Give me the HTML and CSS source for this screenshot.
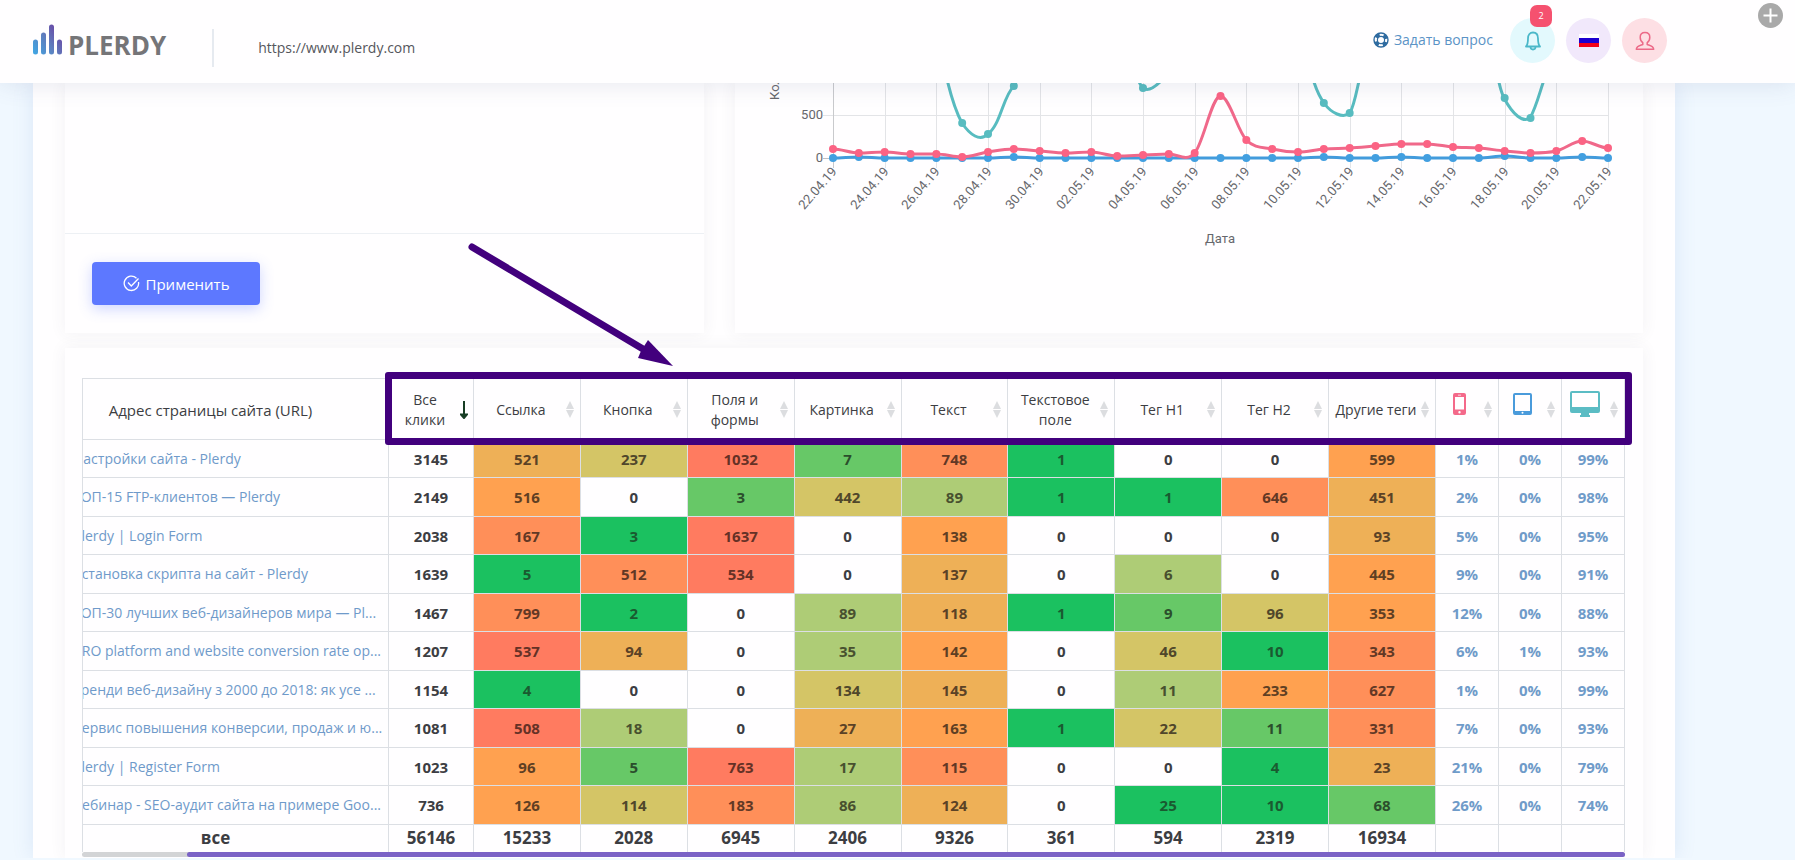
FILE: index.html
```html
<!DOCTYPE html>
<html lang="ru">
<head>
<meta charset="utf-8">
<title>Plerdy</title>
<link rel="stylesheet" href="styles.css">
</head>
<body>
<header class="topbar">
  <a class="logo" href="#">
    <svg class="logo-mark" viewBox="0 0 30 31" aria-hidden="true">
      <defs>
        <linearGradient id="bars" x1="0" y1="1" x2="1" y2="0.3">
          <stop offset="0" stop-color="#3fa9e6"/><stop offset="0.55" stop-color="#5f7dbd"/><stop offset="1" stop-color="#6a45a4"/>
        </linearGradient>
      </defs>
      <path fill="url(#bars)" d="M0 18a2.500 2.500 0 0 1 5 0v10a2.500 2.500 0 0 1-5 0zM8 11a2.500 2.500 0 0 1 5 0v17a2.500 2.500 0 0 1-5 0zM16 3a2.500 2.500 0 0 1 5 0v25a2.500 2.500 0 0 1-5 0zM24 18a2.500 2.500 0 0 1 5 0v10a2.500 2.500 0 0 1-5 0z"/>
    </svg>
    <span class="logo-name">PLERDY</span>
  </a>
  <span class="divider"></span>
  <span class="site">https://www.plerdy.com</span>
  <nav class="tools">
    <a class="ask" href="#">
      <svg viewBox="0 0 16 16" aria-hidden="true">
        <circle cx="8" cy="8" r="7" fill="none" stroke="#2f6ba0" stroke-width="1.4"/>
        <circle cx="8" cy="8" r="3.600" fill="none" stroke="#2f6ba0" stroke-width="1.2"/>
        <circle cx="8" cy="8" r="5.300" fill="none" stroke="#2f6ba0" stroke-width="3.600" stroke-dasharray="4.200 4.120" stroke-dashoffset="-2.100"/>
      </svg>
      Задать вопрос
    </a>
    <button class="round bell" type="button" aria-label="Уведомления">
      <svg width="18" height="20" viewBox="0 0 18 20" fill="none" stroke="#4bb8c9" stroke-width="1.8" stroke-linejoin="round" aria-hidden="true">
        <path d="M2 15.500C4 13.500 4 11 4 7.500C4 3.500 6 1.500 9 1.500S14 3.500 14 7.500C14 11 14 13.500 16 15.500z"/>
        <path d="M6.500 16C6.700 19.300 11.300 19.300 11.500 16"/>
      </svg>
      <span class="badge">2</span>
    </button>
    <button class="round lang" type="button" aria-label="Русский"><span class="flag"></span></button>
    <button class="round user" type="button" aria-label="Профиль">
      <svg width="20" height="20" viewBox="0 0 20 20" fill="none" stroke="#ec6a88" stroke-width="1.5" stroke-linejoin="round" aria-hidden="true">
        <path d="M10 1.500C6.800 1.500 5.200 3.600 5.200 6.300C5.200 8.700 6.200 10.700 7.800 11.700V13.500C5 14.500 1.500 14.800 1.300 18.300H18.700C18.500 14.800 15 14.500 12.200 13.500V11.700C13.800 10.700 14.800 8.700 14.800 6.300C14.800 3.600 13.200 1.500 10 1.500z"/>
      </svg>
    </button>
  </nav>
  <button class="add" type="button" aria-label="Добавить">
    <svg viewBox="0 0 25 25" aria-hidden="true"><circle cx="12.500" cy="12.500" r="12.500" fill="#a9a9a9"/><path d="M12.500 5.500v14M5.500 12.500h14" stroke="#fff" stroke-width="2"/></svg>
  </button>
</header>
<main class="page">
  <div class="row">
    <section class="card filter">
      <div class="filter-body"></div>
      <div class="filter-foot">
        <button class="apply" type="button">
          <svg width="17" height="17" viewBox="0 0 17 17" fill="none" stroke="#fff" stroke-width="1.300" aria-hidden="true">
            <path d="M13.500 3.200A7.200 7.200 0 1 0 15.500 7"/><path d="M5 7.500l3.300 3.500L15.500 3.500"/>
          </svg>
          Применить
        </button>
      </div>
    </section>
    <section class="card chart-card">
      <svg class="chart" id="chart" viewBox="0 0 908 250" role="img" aria-label="Клики по датам"></svg>
    </section>
  </div>
  <section class="card table-card">
    <div class="table-wrap">
      <table class="clicks">
        <colgroup>
          <col class="c-url"><col class="c-all">
          <col class="c-tag"><col class="c-tag"><col class="c-tag"><col class="c-tag"><col class="c-tag"><col class="c-tag"><col class="c-tag"><col class="c-tag"><col class="c-tag">
          <col class="c-dev"><col class="c-dev"><col class="c-dev">
        </colgroup>
        <thead>
          <tr>
            <th class="url">Адрес страницы сайта (URL)</th>
            <th class="sorted">Все<br>клики<svg class="down" width="8" height="18" viewBox="0 0 8 18" aria-hidden="true"><path d="M4 0v15M1 13.500L4 17L7 13.500z" fill="#173d24" stroke="#173d24" stroke-width="2"/></svg></th>
            <th class="sort">Ссылка</th>
            <th class="sort">Кнопка</th>
            <th class="sort">Поля и<br>формы</th>
            <th class="sort">Картинка</th>
            <th class="sort">Текст</th>
            <th class="sort">Текстовое<br>поле</th>
            <th class="sort">Тег H1</th>
            <th class="sort">Тег H2</th>
            <th class="sort">Другие теги</th>
            <th class="sort device" aria-label="Телефон"><svg width="13" height="22" viewBox="0 0 13 22" aria-hidden="true"><path fill="#f4698a" fill-rule="evenodd" d="M2 0h9a2 2 0 0 1 2 2v18a2 2 0 0 1-2 2H2a2 2 0 0 1-2-2V2a2 2 0 0 1 2-2zM2 4v12.500h9V4zM5 1.700v.8h3v-.8zM6.500 18a1.200 1.200 0 1 0 0 2.400a1.200 1.200 0 0 0 0-2.400z"/></svg></th>
            <th class="sort device" aria-label="Планшет"><svg width="19" height="22" viewBox="0 0 19 22" aria-hidden="true"><path fill="#4a9bdb" fill-rule="evenodd" d="M2 0h15a2 2 0 0 1 2 2v18a2 2 0 0 1-2 2H2a2 2 0 0 1-2-2V2a2 2 0 0 1 2-2zM2 2v16h15V2zM9.500 18.800a1 1 0 1 0 0 2a1 1 0 0 0 0-2z"/></svg></th>
            <th class="sort device" aria-label="Компьютер"><svg width="30" height="26" viewBox="0 0 30 26" aria-hidden="true"><path fill="#5bbcc4" fill-rule="evenodd" d="M2 0h26a2 2 0 0 1 2 2v18a2 2 0 0 1-2 2H19v2h1v2H10v-2h1v-2H2a2 2 0 0 1-2-2V2a2 2 0 0 1 2-2zM2 2v14h26V2z"/></svg></th>
          </tr>
        </thead>
        <tbody id="rows"></tbody>
        <tfoot>
          <tr><th class="total">все</th><td>56146</td><td>15233</td><td>2028</td><td>6945</td><td>2406</td><td>9326</td><td>361</td><td>594</td><td>2319</td><td>16934</td><td></td><td></td><td></td></tr>
        </tfoot>
      </table>
      <div class="scroll"><span class="thumb"></span></div>
      <div class="frame"></div>
    </div>
  </section>
  <svg class="pointer" width="210" height="126" viewBox="0 0 210 126" aria-hidden="true">
    <path d="M5 5L176 107" stroke="#42007d" stroke-width="7" stroke-linecap="round"/>
    <path d="M181 98L206 124L171 116L174 109z" fill="#42007d"/>
  </svg>
</main>
<script src="app.js"></script>
</body>
</html>
```

FILE: styles.css
```css
* { box-sizing: border-box; }

body {
  margin: 0;
  background: #f0f8ff;
  color: #3c3d42;
  font: 14px/20px "Open Sans", "Noto Sans", sans-serif;
}

a { text-decoration: none; }

button { font: inherit; border: 0; padding: 0; cursor: pointer; }

.topbar {
  position: relative;
  z-index: 2;
  display: flex;
  align-items: center;
  height: 83px;
  padding: 0 12px 0 33px;
  background: #fffeff;
  box-shadow: 0 0 24px rgba(70, 80, 130, 0.14);
}

.logo { display: flex; align-items: flex-end; gap: 5px; margin-bottom: 4px; }
.logo-mark { width: 30px; height: 31px; }
.logo-name { color: #757578; font-size: 26px; line-height: 20px; font-weight: 700; }

.divider { width: 2px; height: 38px; margin: 12px 44px 0 46px; background: #e6eaf0; }
.site { color: #55565c; padding-top: 13px; }

.tools { display: flex; align-items: center; gap: 11px; margin-left: auto; }
.ask { display: flex; align-items: center; gap: 5px; color: #5b93c6; margin: 0 6px 3px 0; }
.ask svg { width: 16px; height: 16px; }

.round {
  position: relative;
  display: flex;
  align-items: center;
  justify-content: center;
  width: 45px;
  height: 45px;
  margin-bottom: 2px;
  border-radius: 50%;
}
.bell { background: #e3f9fd; }
.lang { background: #f1e8fb; }
.user { background: #fddfe4; }
.badge {
  position: absolute;
  top: -13px;
  right: 3px;
  width: 22px;
  height: 22px;
  border-radius: 7px;
  background: #f5516f;
  color: #fff;
  font-size: 9px;
  line-height: 22px;
}
.flag {
  width: 20px;
  height: 13px;
  background: linear-gradient(#fff 4px, #1c00d0 4px, #1c00d0 9px, #f20018 9px);
}
.add { align-self: flex-start; width: 25px; height: 25px; margin: 3px 0 0 91px; background: none; }
.add svg { display: block; }

.page {
  position: relative;
  margin: 0 120px 0 33px;
  padding: 0 32px;
  background: #fffeff;
  box-shadow: 0 0 20px rgba(90, 130, 200, 0.14);
}

.row { display: grid; grid-template-columns: 639px 1fr; gap: 31px; }
.card { background: #fffeff; box-shadow: 0 0 15px 1px rgba(60, 60, 90, 0.06); }

.filter { display: flex; flex-direction: column; }
.filter-body { height: 151px; border-bottom: 1px solid #edf0f4; }
.filter-foot { padding: 28px 27px; }
.apply {
  display: flex;
  align-items: center;
  justify-content: center;
  gap: 6px;
  width: 168px;
  height: 43px;
  border-radius: 4px;
  background: #5d78ff;
  color: #fff;
  box-shadow: 0 4px 14px rgba(93, 120, 255, 0.3);
  font-size: 15px;
}

.chart { display: block; width: 100%; }
.chart text { font: 13px Roboto, sans-serif; fill: #66676c; }

.table-card { margin-top: 15px; padding: 30px 18px 1px 17px; }
.table-wrap { position: relative; }

.clicks { width: 100%; table-layout: fixed; border-collapse: collapse; text-align: center; }
.c-url { width: 306px; }
.c-all { width: 85px; }
.c-dev { width: 63px; }

.clicks th, .clicks td { border: 1px solid #dcdfe4; padding: 0; }
.clicks thead th { position: relative; height: 61px; padding: 2px 12px 0 0; font-weight: 500; white-space: nowrap; }
.clicks thead .url { padding-right: 50px; font-size: 15px; font-weight: 400; }
.clicks thead .device { padding: 0 16px 10px 0; }
.device svg { display: block; margin: 0 auto; }
.down { position: absolute; right: 5px; top: 22px; }

.sort::before, .sort::after {
  content: "";
  position: absolute;
  right: 6px;
  border: solid transparent;
  border-width: 0 4px;
}
.sort::before { top: 22px; border-bottom: 8px solid #dcdde0; }
.sort::after { top: 31px; border-top: 8px solid #dcdde0; }

.clicks tbody tr { height: 38px; }
.clicks tbody tr:nth-child(even) { height: 39px; }
.clicks tbody td { font-size: 15px; font-weight: 700; }
.clicks tbody .url { font-size: 14px; font-weight: 400; text-align: left; }
.url a { display: block; overflow: hidden; white-space: nowrap; text-indent: -10px; color: #6f9aca; }
.clicks tbody .share { color: #6f9bc9; }

.clicks .h1 { background: #1bc160; color: #1a5a30; }
.clicks .h2 { background: #67c867; color: #2b4e2c; }
.clicks .h3 { background: #aecc76; color: #48502f; }
.clicks .h4 { background: #d4c566; color: #50472b; }
.clicks .h5 { background: #eeb057; color: #5b4226; }
.clicks .h6 { background: #ffa150; color: #5f3f23; }
.clicks .h7 { background: #ff8f59; color: #623825; }
.clicks .h8 { background: #ff7b60; color: #653126; }

.clicks tfoot th, .clicks tfoot td { height: 27px; font-size: 17px; font-weight: 700; border-bottom: 0; }
.clicks tfoot .total { padding-right: 40px; }

.scroll { height: 5px; padding-left: 105px; border-radius: 3px; background: #d3d4d6; }
.thumb { display: block; height: 5px; border-radius: 3px; background: #7a62c6; }

.frame {
  position: absolute;
  top: -6px;
  left: 303px;
  right: -7px;
  height: 73px;
  border: 7px solid #42007d;
  border-radius: 3px;
}
.pointer { position: absolute; left: 434px; top: 159px; fill: none; }
```

FILE: app.js
```js
const pages = [
  ["Настройки сайта - Plerdy", 3145, "521:5 237:4 1032:8 7:2 748:7 1:1 0 0 599:6", "1% 0% 99%"],
  ["ТОП-15 FTP-клиентов — Plerdy", 2149, "516:6 0 3:2 442:4 89:3 1:1 1:1 646:7 451:5", "2% 0% 98%"],
  ["Plerdy | Login Form", 2038, "167:7 3:1 1637:8 0 138:6 0 0 0 93:5", "5% 0% 95%"],
  ["Установка скрипта на сайт - Plerdy", 1639, "5:1 512:7 534:8 0 137:5 0 6:3 0 445:6", "9% 0% 91%"],
  ["ТОП-30 лучших веб-дизайнеров мира — Pl...", 1467, "799:7 2:1 0 89:3 118:5 1:1 9:2 96:4 353:6", "12% 0% 88%"],
  ["CRO platform and website conversion rate op...", 1207, "537:8 94:5 0 35:3 142:6 0 46:4 10:1 343:7", "6% 1% 93%"],
  ["Тренди веб-дизайну з 2000 до 2018: як усе ...", 1154, "4:1 0 0 134:4 145:5 0 11:3 233:6 627:7", "1% 0% 99%"],
  ["Сервис повышения конверсии, продаж и ю...", 1081, "508:8 18:3 0 27:5 163:6 1:1 22:4 11:2 331:7", "7% 0% 93%"],
  ["Plerdy | Register Form", 1023, "96:6 5:2 763:8 17:3 115:7 0 0 4:1 23:5", "21% 0% 79%"],
  ["Вебинар - SEO-аудит сайта на примере Goo...", 736, "126:6 114:4 183:7 86:3 124:5 0 25:1 10:1 68:2", "26% 0% 74%"]
];

document.getElementById("rows").innerHTML = pages.map(([title, all, tags, shares]) => {
  const heat = tags.split(" ").map(t => {
    const [n, level] = t.split(":");
    return `<td${level ? ` class="h${level}"` : ""}>${n}</td>`;
  }).join("");
  const share = shares.split(" ").map(s => `<td class="share">${s}</td>`).join("");
  return `<tr><td class="url"><a href="#">${title}</a></td><td>${all}</td>${heat}${share}</tr>`;
}).join("");

const X0 = 98, STEP = 775 / 30;
const x = i => X0 + i * STEP;
const red = [66, 70, 69, 71, 71, 74, 69, 66, 68, 70, 69, 73, 72, 71, 70, 13, 57, 66, 69, 66, 65, 63, 61, 61, 64, 65, 68, 70, 68, 58, 65];
const blue = red.map((_, i) => [1, 7, 19, 22, 29].includes(i) ? 74 : i === 26 ? 73 : 75);

function smooth(ys) {
  let d = `M${x(0)} ${ys[0]}`;
  const slope = i => {
    if (i <= 0 || i >= ys.length - 1) return 0;
    const a = ys[i] - ys[i - 1], b = ys[i + 1] - ys[i];
    return a * b <= 0 ? 0 : (a + b) / 2;
  };
  for (let i = 1; i < ys.length; i++) {
    d += `C${x(i - 1) + STEP / 3} ${ys[i - 1] + slope(i - 1) / 3} ${x(i) - STEP / 3} ${ys[i] - slope(i) / 3} ${x(i)} ${ys[i]}`;
  }
  return d;
}
const line = (d, c) => `<path d="${d}" fill="none" stroke="${c}" stroke-width="3"/>`;
const dots = (pts, c) => pts.map(([i, y]) => `<circle cx="${x(i)}" cy="${y}" r="4" fill="${c}"/>`).join("");

const dates = ["22.04", "24.04", "26.04", "28.04", "30.04", "02.05", "04.05", "06.05", "08.05", "10.05", "12.05", "14.05", "16.05", "18.05", "20.05", "22.05"];
let out = `<path d="M88 32.500H873" stroke="#e3e4e7"/><path d="M88 75.500H873" stroke="#bfc0c4"/>`;
dates.forEach((d, k) => {
  const gx = Math.round(x(k * 2)) + 0.5;
  out += `<path d="M${gx} 0V85" stroke="${k ? "#e3e4e7" : "#c9cacd"}"/>`;
  out += `<text text-anchor="end" transform="translate(${gx + 4} 89) rotate(-49)">${d}.19</text>`;
});
out += `<text x="88" y="36" text-anchor="end">500</text><text x="88" y="79" text-anchor="end">0</text>`;
out += `<text x="485" y="160" text-anchor="middle">Дата</text>`;
out += `<text transform="translate(44 17) rotate(-90)">Количество</text>`;
out += line(smooth(blue), "#429bdc") + dots(blue.map((y, i) => [i, y]), "#429fe0");
out += line(smooth(red), "#f0688a") + dots(red.map((y, i) => [i, y]), "#fb6384");
out += line("M211 -8C216 14 221 29 227 40C235 52 245 59 253 51C266 41 268 13 279 3L284 -8M403 -4Q405 2 408 5C413 9 420 4 426 -2M578 -4C581 6 584 13 589 20C596 30 608 36 615 30C620 20 622 5 625 -6M763 -5C765 4 766 9 769 15C778 32 788 40 795 35C801 25 805 8 810 -6", "#58bcc0");
out += dots([[5, 40], [6, 51], [7, 3], [12, 5], [19, 20], [20, 30], [26, 15], [27, 35]], "#58bcc0");
document.getElementById("chart").innerHTML = out;
```
